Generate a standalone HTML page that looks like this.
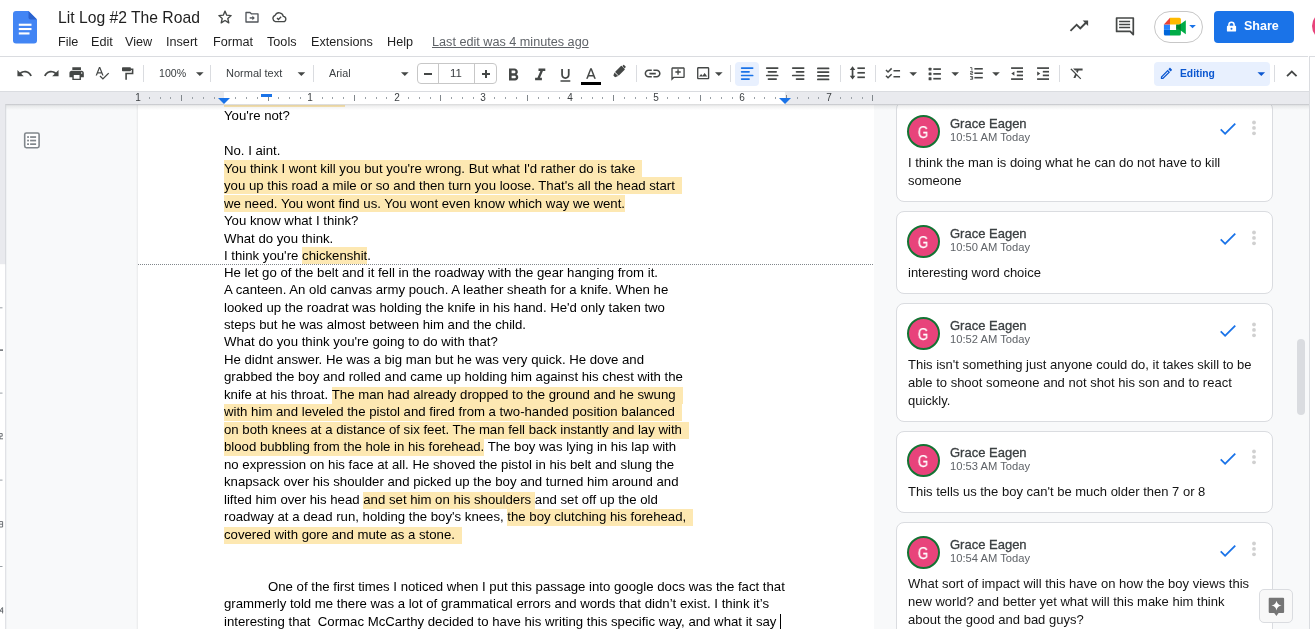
<!DOCTYPE html>
<html><head><meta charset="utf-8">
<style>
*{box-sizing:border-box}
html,body{margin:0;padding:0}
.ln,.menu,.tb,.nm,.tm,.ct,#title,.rl,.av,.txt{will-change:transform}
body{width:1315px;height:629px;overflow:hidden;position:relative;background:#fff;font-family:"Liberation Sans",sans-serif;color:#202124}
.a{position:absolute}
.ic{position:absolute;display:block}
/* header */
#title{left:58px;top:8.2px;font-size:15.7px;color:#1f1f1f;white-space:pre;line-height:20px}
.menu{position:absolute;top:33.7px;font-size:12.65px;color:#1f1f1f;white-space:pre;line-height:16px}
#hline{left:0;top:56px;width:1308px;height:1px;background:#dadce0}
#hline2{left:1310px;top:56px;width:5px;height:1px;background:#dadce0}
#vline{left:1309px;top:56px;width:1px;height:573px;background:#dadce0}
/* toolbar */
.tb{position:absolute;font-size:11px;color:#3c4043;white-space:pre;line-height:14px}
.sep{position:absolute;top:65px;width:1px;height:17px;background:#dadce0}
.arr{position:absolute;top:72.5px;width:0;height:0;border-left:3.5px solid transparent;border-right:3.5px solid transparent;border-top:3.5px solid #444746}
/* ruler */
#ruler{left:0;top:91px;width:1308px;height:13px;background:#e8eaed}
#rulerw{left:224px;top:91px;width:561px;height:13px;background:#fff}
#rshadow{left:0;top:104px;width:1308px;height:3px;background:linear-gradient(rgba(60,64,67,.18),rgba(60,64,67,0))}
.rl{position:absolute;top:92.5px;font-size:9.5px;color:#3c4043;line-height:11px}
/* panels */
#leftp{left:0;top:104px;width:138px;height:525px;background:#f8f9fa}
#vrul{left:0;top:104px;width:6px;height:525px;background:#e8eaed}
#page{left:138px;top:104px;width:736px;height:525px;background:#fff}
#rightp{left:874px;top:104px;width:435px;height:525px;background:#f8f9fa}
/* doc text */
.ln{position:absolute;left:224.2px;height:17.47px;line-height:15.5px;font-size:13.2px;color:#000;white-space:pre}
.h{background:#fde8b2;display:inline-block;height:17.46px;vertical-align:top}
#dots{left:138px;top:264px;width:736px;height:1px;background-image:linear-gradient(90deg,#80868b 50%,transparent 50%);background-size:2px 1px}
/* comments */
.card{position:absolute;left:896px;width:377px;background:#fff;border:1px solid #dadce0;border-radius:8px}
.av{position:absolute;left:10px;width:33px;height:33px;border-radius:50%;background:#e8437b;border:2px solid #137333;color:#fff;font-size:15.6px;text-align:center;line-height:32.2px;-webkit-text-stroke:.25px #fff}
.nm{position:absolute;left:53px;font-size:13px;-webkit-text-stroke:.3px #3c4043;color:#3c4043;white-space:pre;line-height:15px}
.tm{position:absolute;left:53px;font-size:11.2px;color:#5f6368;white-space:pre;line-height:13px}
.ct{position:absolute;left:11px;font-size:13px;color:#141414;white-space:pre;line-height:18px}
</style></head><body>

<!-- HEADER -->
<svg class="ic" style="left:13px;top:11px" width="24" height="33" viewBox="0 0 24 33">
 <path d="M3 0H15.5L24 8.5V29.5Q24 32.5 21 32.5H3Q0 32.5 0 29.5V3Q0 0 3 0Z" fill="#4285f4"/>
 <path d="M15.5 0L24 8.5H17.5Q15.5 8.5 15.5 6.5Z" fill="#2a62cf"/>
 <rect x="5.8" y="12.7" width="12.7" height="2.1" fill="#fff"/>
 <rect x="5.8" y="17.0" width="12.7" height="2.1" fill="#fff"/>
 <rect x="5.8" y="21.4" width="10.7" height="2.1" fill="#fff"/>
</svg>
<div id="title" class="a">Lit Log #2 The Road</div>
<!-- star -->
<svg class="ic" style="left:217px;top:9px" width="16" height="16" viewBox="0 0 24 24"><path d="M12 3.2l2.6 6.1 6.6.6-5 4.4 1.5 6.5L12 17.3l-5.7 3.5 1.5-6.5-5-4.4 6.6-.6z" fill="none" stroke="#444746" stroke-width="2" stroke-linejoin="round"/></svg>
<!-- folder -->
<svg class="ic" style="left:244px;top:9px" width="16" height="16" viewBox="0 0 24 24"><path d="M3 5.2h6l2 2h10v12.3H3z" fill="none" stroke="#50545a" stroke-width="2" stroke-linejoin="round"/><path d="M8.5 13.4h5.5" stroke="#50545a" stroke-width="2.2"/><path d="M12.6 10l3.6 3.4-3.6 3.4z" fill="#50545a"/></svg>
<!-- cloud -->
<svg class="ic" style="left:271px;top:9px" width="16" height="16" viewBox="0 0 24 24"><path d="M6.5 19h11.5a4 4 0 0 0 .5-8 6.5 6.5 0 0 0-12.3-1.5A5 5 0 0 0 6.5 19z" fill="none" stroke="#444746" stroke-width="2"/><path d="M9 13.5l2.2 2.2 4-4" fill="none" stroke="#444746" stroke-width="2"/></svg>

<div class="menu" style="left:57.6px">File</div>
<div class="menu" style="left:90.5px">Edit</div>
<div class="menu" style="left:125px">View</div>
<div class="menu" style="left:166px">Insert</div>
<div class="menu" style="left:212.5px">Format</div>
<div class="menu" style="left:266.7px">Tools</div>
<div class="menu" style="left:310.7px">Extensions</div>
<div class="menu" style="left:386.6px">Help</div>
<div class="menu" style="left:432px;color:#5f6368;text-decoration:underline">Last edit was 4 minutes ago</div>

<!-- right header -->
<svg class="ic" style="left:1068px;top:15.3px" width="21.96" height="21.96" viewBox="0 0 24 24"><path d="M16 6l2.29 2.29-4.88 4.88-4-4L2 16.59 3.41 18l6-6 4 4 6.3-6.29L22 12V6z" fill="#444746"/></svg>
<svg class="ic" style="left:1100px;top:10px" width="50" height="30" viewBox="1100 10 50 30"><path d="M1116.6 18H1133.3V34.6L1130.2 31.4H1116.6Z" fill="none" stroke="#444746" stroke-width="1.7" stroke-linejoin="round"/><path d="M1119.1 21.4H1130.1M1119.1 24.5H1130.1M1119.1 27.6H1130.1" stroke="#444746" stroke-width="1.5"/></svg>
<div class="a" style="left:1154px;top:11px;width:49px;height:31.5px;border:1px solid #c7c7c7;border-radius:16px"></div>
<svg class="ic" style="left:1160px;top:15px" width="40" height="24" viewBox="1160 15 40 24">
 <path d="M1170 17.8H1179.4Q1180.9 17.8 1180.9 19.3V24.5H1170Z" fill="#ffba00"/>
 <path d="M1163.9 24.5H1170V29.9H1163.9Z" fill="#2684fc"/>
 <path d="M1163.9 24.5L1170 17.8V24.5Z" fill="#ea4335"/>
 <path d="M1163.9 29.9H1170V35.4H1165.4Q1163.9 35.4 1163.9 33.9Z" fill="#0066da"/>
 <path d="M1170 29.9H1180.9V33.9Q1180.9 35.4 1179.4 35.4H1170Z" fill="#00ac47"/>
 <path d="M1176.1 24.5H1180.9V29.9H1176.1Z" fill="#00832d"/>
 <path d="M1176.1 27.2L1185.8 20.2V34.2Z" fill="#00ac47"/>
 <path d="M1176.1 27.2L1180.9 23.7V30.7Z" fill="#00832d"/>
 <path d="M1189.2 25.1H1195.9L1192.55 28.2Z" fill="#1a73e8"/>
</svg>
<div class="a" style="left:1214px;top:11px;width:80px;height:32px;background:#1a73e8;border-radius:4px"></div>
<svg class="ic" style="left:1226px;top:21px" width="11" height="11" viewBox="0 0 11 11"><path d="M2.9 4.9V3.8a2.6 2.6 0 0 1 5.2 0V4.9" fill="none" stroke="#fff" stroke-width="1.5"/><rect x=".9" y="4.8" width="9.2" height="5.8" rx=".9" fill="#fff"/><circle cx="5.5" cy="7.7" r="1" fill="#1a73e8"/></svg>
<div class="a txt" style="left:1243.5px;top:19px;font-size:12.5px;font-weight:bold;color:#fff;line-height:14px">Share</div>
<div class="a" style="left:1311.8px;top:11.9px;width:28.6px;height:28.6px;border-radius:50%;background:#e8437b"></div>

<div id="hline" class="a"></div>
<div id="hline2" class="a"></div>




<!-- PANELS -->
<div id="leftp" class="a"></div>

<div id="page" class="a"></div>
<div id="rightp" class="a"></div>
<div class="a" style="left:136px;top:104px;width:2px;height:525px;background:linear-gradient(90deg,rgba(0,0,0,0),rgba(0,0,0,.06))"></div>

<!-- DOC -->
<!--DOC-->
<div class="ln" style="top:90.00px;line-height:17.46px"><span class="h" style="width:121px"></span></div>
<div class="ln" style="top:107.46px;line-height:17.46px">You're not?</div>
<div class="ln" style="top:142.38px;line-height:17.46px">No. I aint.</div>
<div class="ln" style="top:159.84px;line-height:17.46px"><span class="h" style="padding-right:3.4px">You think I wont kill you but you're wrong. But what I'd rather do is take </span></div>
<div class="ln" style="top:177.30px;line-height:17.46px"><span class="h" style="padding-right:3.4px">you up this road a mile or so and then turn you loose. That's all the head start </span></div>
<div class="ln" style="top:194.76px;line-height:17.46px"><span class="h">we need. You wont find us. You wont even know which way we went.</span></div>
<div class="ln" style="top:212.22px;line-height:17.46px">You know what I think?</div>
<div class="ln" style="top:229.68px;line-height:17.46px">What do you think.</div>
<div class="ln" style="top:247.14px;line-height:17.46px">I think you're <span class="h">chickenshit</span>.</div>
<div class="ln" style="top:264.60px">He let go of the belt and it fell in the roadway with the gear hanging from it.</div>
<div class="ln" style="top:282.06px">A canteen. An old canvas army pouch. A leather sheath for a knife. When he</div>
<div class="ln" style="top:299.52px">looked up the roadrat was holding the knife in his hand. He'd only taken two</div>
<div class="ln" style="top:316.98px">steps but he was almost between him and the child.</div>
<div class="ln" style="top:334.44px">What do you think you're going to do with that?</div>
<div class="ln" style="top:351.90px">He didnt answer. He was a big man but he was very quick. He dove and</div>
<div class="ln" style="top:369.36px">grabbed the boy and rolled and came up holding him against his chest with the</div>
<div class="ln" style="top:386.82px">knife at his throat. <span class="h" style="padding-right:3.4px">The man had already dropped to the ground and he swung </span></div>
<div class="ln" style="top:404.28px"><span class="h" style="padding-right:3.4px">with him and leveled the pistol and fired from a two-handed position balanced </span></div>
<div class="ln" style="top:421.74px"><span class="h" style="padding-right:3.4px">on both knees at a distance of six feet. The man fell back instantly and lay with </span></div>
<div class="ln" style="top:439.20px"><span class="h">blood bubbling from the hole in his forehead.</span> The boy was lying in his lap with</div>
<div class="ln" style="top:456.66px">no expression on his face at all. He shoved the pistol in his belt and slung the</div>
<div class="ln" style="top:474.12px">knapsack over his shoulder and picked up the boy and turned him around and</div>
<div class="ln" style="top:491.58px">lifted him over his head <span class="h">and set him on his shoulders </span>and set off up the old</div>
<div class="ln" style="top:509.04px">roadway at a dead run, holding the boy's knees, <span class="h" style="padding-right:3.4px">the boy clutching his forehead, </span></div>
<div class="ln" style="top:526.50px"><span class="h" style="padding-right:3.4px">covered with gore and mute as a stone. </span></div>
<div class="ln" style="top:578.88px;left:267.6px">One of the first times I noticed when I put this passage into google docs was the fact that</div>
<div class="ln" style="top:596.34px">grammerly told me there was a lot of grammatical errors and words that didn’t exist. I think it’s</div>
<div class="ln" style="top:613.80px">interesting that  Cormac McCarthy decided to have his writing this specific way, and what it say </div>
<div id="dots" class="a"></div>
<div class="a" style="left:779.5px;top:614.10px;width:1px;height:16px;background:#000"></div>
<!--/DOC-->

<!-- TOOLBAR -->
<div class="a" style="left:0;top:57px;width:1309px;height:34px;background:#fff"></div>
<div class="a" style="left:735px;top:62px;width:24px;height:24px;border-radius:4px;background:#e8f0fe"></div>
<div class="a" style="left:1154px;top:62px;width:116px;height:24px;border-radius:4px;background:#e8f0fe"></div>
<svg class="ic" style="left:16.49px;top:65.27px" width="16.97" height="16.97" viewBox="0 0 24 24"><path d="M12.5 8c-2.65 0-5.05.99-6.9 2.6L2 7v9h9l-3.62-3.62c1.39-1.16 3.16-1.88 5.12-1.88 3.54 0 6.55 2.31 7.6 5.5l2.37-.78C21.08 11.03 17.15 8 12.5 8z" fill="#444746"/></svg>
<svg class="ic" style="left:42.98px;top:65.27px" width="16.97" height="16.97" viewBox="0 0 24 24"><path d="M18.4 10.6C16.55 8.99 14.15 8 11.5 8c-4.65 0-8.58 3.03-9.96 7.22L3.9 16c1.05-3.19 4.05-5.5 7.6-5.5 1.95 0 3.730.72 5.12 1.88L13 16h9V7l-3.6 3.6z" fill="#444746"/></svg>
<svg class="ic" style="left:67.66px;top:64.76px" width="17.28" height="17.28" viewBox="0 0 24 24"><path d="M19 8H5c-1.66 0-3 1.34-3 3v6h4v4h12v-4h4v-6c0-1.66-1.34-3-3-3zm-3 11H8v-5h8v5zm3-7c-.55 0-1-.45-1-1s.45-1 1-1 1 .45 1 1-.45 1-1 1zm-1-9H6v4h12V3z" fill="#444746"/></svg>
<svg class="ic" style="left:94.02px;top:65.18px" width="15.84" height="15.84" viewBox="0 0 24 24"><path d="M12.45 16h2.09L9.43 3H7.57L2.46 16h2.09l1.12-3h5.64l1.14 3zm-6.02-5L8.5 5.48 10.57 11H6.43zm15.16.59l-8.09 8.09L9.83 16l-1.41 1.41 5.09 5.09L23 13l-1.41-1.41z" fill="#444746"/></svg>
<svg class="ic" style="left:503.14px;top:64.74px" width="20.64" height="20.64" viewBox="0 0 24 24"><path d="M15.6 10.79c.97-.67 1.65-1.77 1.65-2.79 0-2.26-1.75-4-4-4H7v14h7.04c2.09 0 3.71-1.7 3.710-3.79 0-1.52-.86-2.82-2.15-3.42zM10 6.5h3c.83 0 1.5.67 1.5 1.5s-.67 1.5-1.5 1.5h-3v-3zm3.5 9H10v-3h3.5c.83 0 1.5.67 1.5 1.5s-.67 1.5-1.5 1.5z" fill="#444746"/></svg>
<svg class="ic" style="left:530.00px;top:64.65px" width="20.40" height="20.40" viewBox="0 0 24 24"><path d="M10 4v3h2.21l-3.42 8H6v3h8v-3h-2.21l3.42-8H18V4z" fill="#444746"/></svg>
<svg class="ic" style="left:556.70px;top:66.50px" width="16.80" height="16.80" viewBox="0 0 24 24"><path d="M12 17c3.31 0 6-2.690 6-6V3h-2.5v8c0 1.93-1.57 3.5-3.5 3.5S8.5 12.93 8.5 11V3H6v8c0 3.31 2.69 6 6 6zm-7 2v2h14v-2H5z" fill="#444746"/></svg>
<svg class="ic" style="left:581.80px;top:65.50px" width="18.00" height="18.00" viewBox="0 0 24 24"><path d="M11 3L5.5 17h2.25l1.12-3h6.25l1.12 3h2.25L13 3h-2zm-1.38 9L12 5.67 14.38 12H9.62z" fill="#444746"/></svg>
<svg class="ic" style="left:643.40px;top:64.30px" width="19.20" height="19.20" viewBox="0 0 24 24"><path d="M3.9 12c0-1.71 1.39-3.1 3.1-3.1h4V7H7c-2.76 0-5 2.24-5 5s2.24 5 5 5h4v-1.9H7c-1.71 0-3.1-1.39-3.1-3.1zM8 13h8v-2H8v2zm9-6h-4v1.9h4c1.71 0 3.1 1.39 3.1 3.1s-1.39 3.1-3.1 3.1h-4V17h4c2.76 0 5-2.24 5-5s-2.24-5-5-5z" fill="#444746"/></svg>
<svg class="ic" style="left:670.16px;top:65.66px" width="16.08" height="16.08" viewBox="0 0 24 24"><path d="M20 2H4c-1.1 0-2 .9-2 2v18l4-4h14c1.1 0 2-.9 2-2V4c0-1.1-.9-2-2-2zm0 14H5.17L4 17.17V4h16v12zM11 5h2v3h3v2h-3v3h-2v-3H8V8h3z" fill="#444746"/></svg>
<svg class="ic" style="left:694.74px;top:65.24px" width="16.32" height="16.32" viewBox="0 0 24 24"><path d="M19 5v14H5V5h14m0-2H5c-1.1 0-2 .9-2 2v14c0 1.1.9 2 2 2h14c1.1 0 2-.9 2-2V5c0-1.1-.9-2-2-2zm-4.86 8.86l-3 3.87L9 13.14 6 17h12l-3.86-5.14z" fill="#444746"/></svg>
<svg class="ic" style="left:884.14px;top:65.11px" width="17.52" height="17.52" viewBox="0 0 24 24"><path d="M22 7h-9v2h9V7zm0 8h-9v2h9v-2zM5.54 11L2 7.46l1.41-1.410 2.12 2.12 4.24-4.24 1.41 1.41L5.54 11zm0 8L2 15.46l1.41-1.41 2.12 2.12 4.24-4.24 1.41 1.41L5.54 19z" fill="#444746"/></svg>
<svg class="ic" style="left:1069.12px;top:65.46px" width="16.32" height="16.32" viewBox="0 0 24 24"><path d="M3.27 5L2 6.27l6.97 6.97L6.5 19h3l1.57-3.66L16.73 21 18 19.73 3.55 5.27 3.27 5zM6 5v.18L8.82 8h2.4l-.72 1.68 2.1 2.1L14.21 8H20V5H6z" fill="#444746"/></svg>
<svg class="ic" style="left:1280.90px;top:62.87px" width="21.60" height="21.60" viewBox="0 0 24 24"><path d="M12 8l-6 6 1.41 1.41L12 10.83l4.59 4.58L18 14z" fill="#444746"/></svg>
<svg class="ic" style="left:0;top:0" width="1315" height="100" viewBox="0 0 1315 100"><line x1="741.65" y1="68.10" x2="752.65" y2="68.10" stroke="#1a73e8" stroke-width="1.70" stroke-linecap="round"/><line x1="766.75" y1="68.10" x2="777.65" y2="68.10" stroke="#444746" stroke-width="1.70" stroke-linecap="round"/><line x1="792.75" y1="68.10" x2="803.65" y2="68.10" stroke="#444746" stroke-width="1.70" stroke-linecap="round"/><line x1="817.85" y1="68.40" x2="828.55" y2="68.40" stroke="#444746" stroke-width="1.70" stroke-linecap="round"/><line x1="741.65" y1="71.80" x2="749.05" y2="71.80" stroke="#1a73e8" stroke-width="1.70" stroke-linecap="round"/><line x1="768.45" y1="71.80" x2="776.15" y2="71.80" stroke="#444746" stroke-width="1.70" stroke-linecap="round"/><line x1="796.55" y1="71.80" x2="803.65" y2="71.80" stroke="#444746" stroke-width="1.70" stroke-linecap="round"/><line x1="817.85" y1="72.10" x2="828.55" y2="72.10" stroke="#444746" stroke-width="1.70" stroke-linecap="round"/><line x1="741.65" y1="75.50" x2="752.65" y2="75.50" stroke="#1a73e8" stroke-width="1.70" stroke-linecap="round"/><line x1="766.75" y1="75.50" x2="777.65" y2="75.50" stroke="#444746" stroke-width="1.70" stroke-linecap="round"/><line x1="792.75" y1="75.50" x2="803.65" y2="75.50" stroke="#444746" stroke-width="1.70" stroke-linecap="round"/><line x1="817.85" y1="75.80" x2="828.55" y2="75.80" stroke="#444746" stroke-width="1.70" stroke-linecap="round"/><line x1="741.65" y1="79.10" x2="749.05" y2="79.10" stroke="#1a73e8" stroke-width="1.70" stroke-linecap="round"/><line x1="768.45" y1="79.10" x2="776.15" y2="79.10" stroke="#444746" stroke-width="1.70" stroke-linecap="round"/><line x1="796.55" y1="79.10" x2="803.65" y2="79.10" stroke="#444746" stroke-width="1.70" stroke-linecap="round"/><line x1="817.85" y1="79.40" x2="828.55" y2="79.40" stroke="#444746" stroke-width="1.70" stroke-linecap="round"/><line x1="857.40" y1="68.20" x2="864.90" y2="68.20" stroke="#444746" stroke-width="1.70" stroke-linecap="butt"/><line x1="857.40" y1="72.80" x2="864.90" y2="72.80" stroke="#444746" stroke-width="1.70" stroke-linecap="butt"/><line x1="857.40" y1="77.30" x2="864.90" y2="77.30" stroke="#444746" stroke-width="1.70" stroke-linecap="butt"/><path d="M852.55 68.5V77.3" stroke="#444746" stroke-width="1.7"/><path d="M849.8 70.1L852.55 66.3L855.3 70.1zM849.8 75.7L852.55 79.6L855.3 75.7z" fill="#444746"/><rect x="928.6" y="67.65" width="2.9" height="2.9" rx=".5" fill="#444746"/><line x1="933.30" y1="69.10" x2="940.90" y2="69.10" stroke="#444746" stroke-width="1.70" stroke-linecap="butt"/><rect x="928.6" y="72.45" width="2.9" height="2.9" rx=".5" fill="#444746"/><line x1="933.30" y1="73.90" x2="940.90" y2="73.90" stroke="#444746" stroke-width="1.70" stroke-linecap="butt"/><rect x="928.6" y="77.25" width="2.9" height="2.9" rx=".5" fill="#444746"/><line x1="933.30" y1="78.70" x2="940.90" y2="78.70" stroke="#444746" stroke-width="1.70" stroke-linecap="butt"/><line x1="974.40" y1="68.80" x2="982.80" y2="68.80" stroke="#444746" stroke-width="1.60" stroke-linecap="butt"/><line x1="974.40" y1="73.20" x2="982.80" y2="73.20" stroke="#444746" stroke-width="1.60" stroke-linecap="butt"/><line x1="974.40" y1="77.70" x2="982.80" y2="77.70" stroke="#444746" stroke-width="1.60" stroke-linecap="butt"/><path d="M970.1 67.6H971.9V70.5M970.1 71.6H972.6V73H970.6V74.4H972.9M970.1 76.5H972.6V79.3H970.1M970.9 77.9H972.6" fill="none" stroke="#444746" stroke-width="0.85"/><line x1="1011.10" y1="68.10" x2="1023.00" y2="68.10" stroke="#444746" stroke-width="1.70" stroke-linecap="butt"/><line x1="1011.10" y1="79.10" x2="1023.00" y2="79.10" stroke="#444746" stroke-width="1.70" stroke-linecap="butt"/><line x1="1016.80" y1="71.70" x2="1023.00" y2="71.70" stroke="#444746" stroke-width="1.70" stroke-linecap="butt"/><line x1="1016.80" y1="75.40" x2="1023.00" y2="75.40" stroke="#444746" stroke-width="1.70" stroke-linecap="butt"/><path d="M1014.4 71.4V75.8L1011.3 73.6z" fill="#444746"/><line x1="1037.10" y1="68.10" x2="1049.00" y2="68.10" stroke="#444746" stroke-width="1.70" stroke-linecap="butt"/><line x1="1037.10" y1="79.10" x2="1049.00" y2="79.10" stroke="#444746" stroke-width="1.70" stroke-linecap="butt"/><line x1="1042.80" y1="71.70" x2="1049.00" y2="71.70" stroke="#444746" stroke-width="1.70" stroke-linecap="butt"/><line x1="1042.80" y1="75.40" x2="1049.00" y2="75.40" stroke="#444746" stroke-width="1.70" stroke-linecap="butt"/><path d="M1037.2 71.4V75.8L1040.3 73.6z" fill="#444746"/><rect x="122" y="67.3" width="8.9" height="4" rx=".8" fill="#444746"/><path d="M130.5 69.2H132.6V73.5H126.1V79.8" fill="none" stroke="#444746" stroke-width="1.6"/><g transform="translate(618.6 72) rotate(45)"><rect x="-2.6" y="-6.5" width="5.2" height="9" rx=".6" fill="#444746"/><path d="M-2.6 3.2H2.6L1.2 6.2H-1.2z" fill="#444746"/><rect x="-1.6" y="-8.8" width="3.2" height="1.9" rx=".5" fill="#444746"/></g></svg>
<svg class="ic" style="left:1159.06px;top:66.16px" width="14.88" height="14.88" viewBox="0 0 24 24"><path d="M3 17.25V21h3.75L17.81 9.94l-3.75-3.75L3 17.25zM5.92 19H5v-.92l9.06-9.06.92.92L5.92 19zM20.71 5.63l-2.34-2.34c-.2-.2-.45-.29-.71-.29s-.51.1-.7.29l-1.83 1.83 3.75 3.75 1.83-1.83c.39-.39.39-1.02 0-1.41z" fill="#0b57d0"/></svg>
<div class="tb" style="left:1180px;top:66.6px;font-size:10.3px;font-weight:bold;color:#0b57d0">Editing</div>
<div class="a" style="left:581px;top:82px;width:20px;height:3px;background:#000"></div>
<div class="sep" style="left:142.9px"></div>
<div class="sep" style="left:210.0px"></div>
<div class="sep" style="left:313.4px"></div>
<div class="sep" style="left:636.0px"></div>
<div class="sep" style="left:729.5px"></div>
<div class="sep" style="left:839.8px"></div>
<div class="sep" style="left:875.1px"></div>
<div class="sep" style="left:1059.1px"></div>
<div class="sep" style="left:1274.0px"></div>
<svg class="ic" style="left:0;top:0" width="1315" height="100" viewBox="0 0 1315 100"><path d="M196.00 72.2h7.6l-3.8 3.8z" fill="#444746"/><path d="M297.60 72.2h7.6l-3.8 3.8z" fill="#444746"/><path d="M401.00 72.2h7.6l-3.8 3.8z" fill="#444746"/><path d="M715.00 72.2h7.6l-3.8 3.8z" fill="#444746"/><path d="M909.40 72.2h7.6l-3.8 3.8z" fill="#444746"/><path d="M951.40 72.2h7.6l-3.8 3.8z" fill="#444746"/><path d="M992.20 72.2h7.6l-3.8 3.8z" fill="#444746"/><path d="M1257.5 72.2h7.6l-3.8 3.8z" fill="#0b57d0"/></svg>
<div class="tb" style="left:158.6px;top:65.6px;font-size:10.6px">100%</div>
<div class="tb" style="left:225.8px;top:65.6px;font-size:11px">Normal text</div>
<div class="tb" style="left:328.8px;top:65.6px;font-size:10.8px">Arial</div>
<div class="a" style="left:417px;top:63px;width:79.5px;height:21px;border:1px solid #c7c7c7;border-radius:4px"></div>
<div class="a" style="left:438px;top:63px;width:1px;height:21px;background:#c7c7c7"></div>
<div class="a" style="left:474px;top:63px;width:1px;height:21px;background:#c7c7c7"></div>
<div class="a" style="left:424px;top:73px;width:8px;height:1.6px;background:#444746"></div>
<div class="a" style="left:481.8px;top:73px;width:8px;height:1.6px;background:#444746"></div>
<div class="a" style="left:485.1px;top:69.8px;width:1.6px;height:8px;background:#444746"></div>
<div class="tb" style="left:449.5px;top:65.6px;font-size:11.4px">11</div>
<!-- /TOOLBAR -->

<!-- COMMENTS -->
<div class="a" style="left:874px;top:104px;width:435px;height:525px;overflow:hidden">
<div class="card" style="left:22.4px;top:-2.80px;height:100.50px;width:376.5px"></div>
<div class="av" style="left:33.0px;top:10.50px">&#8203;<span style="display:inline-block;transform:scaleX(.86)">G</span></div>
<div class="nm" style="left:75.6px;top:11.80px">Grace Eagen</div>
<div class="tm" style="left:75.6px;top:26.55px">10:51 AM Today</div>
<div class="ct" style="left:33.6px;top:49.80px">I think the man is doing what he can do not have to kill</div>
<div class="ct" style="left:33.6px;top:67.65px">someone</div>
<svg class="ic" style="left:343.02px;top:14.33px" width="21.60" height="21.60" viewBox="0 0 24 24"><path d="M9 16.17L4.83 12l-1.42 1.41L9 19 21 7l-1.41-1.41z" fill="#1a73e8"/></svg>
<svg class="ic" style="left:377.20px;top:16.10px" width="6" height="16" viewBox="0 0 6 16"><circle cx="3" cy="2.5" r="1.9" fill="#d0d0d0"/><circle cx="3" cy="7.9" r="1.9" fill="#d0d0d0"/><circle cx="3" cy="13.3" r="1.9" fill="#d0d0d0"/></svg>
<div class="card" style="left:22.4px;top:107.20px;height:82.65px;width:376.5px"></div>
<div class="av" style="left:33.0px;top:120.50px">&#8203;<span style="display:inline-block;transform:scaleX(.86)">G</span></div>
<div class="nm" style="left:75.6px;top:121.80px">Grace Eagen</div>
<div class="tm" style="left:75.6px;top:136.55px">10:50 AM Today</div>
<div class="ct" style="left:33.6px;top:159.80px">interesting word choice</div>
<svg class="ic" style="left:343.02px;top:124.33px" width="21.60" height="21.60" viewBox="0 0 24 24"><path d="M9 16.17L4.83 12l-1.42 1.41L9 19 21 7l-1.41-1.41z" fill="#1a73e8"/></svg>
<svg class="ic" style="left:377.20px;top:126.10px" width="6" height="16" viewBox="0 0 6 16"><circle cx="3" cy="2.5" r="1.9" fill="#d0d0d0"/><circle cx="3" cy="7.9" r="1.9" fill="#d0d0d0"/><circle cx="3" cy="13.3" r="1.9" fill="#d0d0d0"/></svg>
<div class="card" style="left:22.4px;top:199.30px;height:118.35px;width:376.5px"></div>
<div class="av" style="left:33.0px;top:212.60px">&#8203;<span style="display:inline-block;transform:scaleX(.86)">G</span></div>
<div class="nm" style="left:75.6px;top:213.90px">Grace Eagen</div>
<div class="tm" style="left:75.6px;top:228.65px">10:52 AM Today</div>
<div class="ct" style="left:33.6px;top:251.90px">This isn't something just anyone could do, it takes skill to be</div>
<div class="ct" style="left:33.6px;top:269.75px">able to shoot someone and not shot his son and to react</div>
<div class="ct" style="left:33.6px;top:287.60px">quickly.</div>
<svg class="ic" style="left:343.02px;top:216.43px" width="21.60" height="21.60" viewBox="0 0 24 24"><path d="M9 16.17L4.83 12l-1.42 1.41L9 19 21 7l-1.41-1.41z" fill="#1a73e8"/></svg>
<svg class="ic" style="left:377.20px;top:218.20px" width="6" height="16" viewBox="0 0 6 16"><circle cx="3" cy="2.5" r="1.9" fill="#d0d0d0"/><circle cx="3" cy="7.9" r="1.9" fill="#d0d0d0"/><circle cx="3" cy="13.3" r="1.9" fill="#d0d0d0"/></svg>
<div class="card" style="left:22.4px;top:326.50px;height:82.65px;width:376.5px"></div>
<div class="av" style="left:33.0px;top:339.80px">&#8203;<span style="display:inline-block;transform:scaleX(.86)">G</span></div>
<div class="nm" style="left:75.6px;top:341.10px">Grace Eagen</div>
<div class="tm" style="left:75.6px;top:355.85px">10:53 AM Today</div>
<div class="ct" style="left:33.6px;top:379.10px">This tells us the boy can't be much older then 7 or 8</div>
<svg class="ic" style="left:343.02px;top:343.63px" width="21.60" height="21.60" viewBox="0 0 24 24"><path d="M9 16.17L4.83 12l-1.42 1.41L9 19 21 7l-1.41-1.41z" fill="#1a73e8"/></svg>
<svg class="ic" style="left:377.20px;top:345.40px" width="6" height="16" viewBox="0 0 6 16"><circle cx="3" cy="2.5" r="1.9" fill="#d0d0d0"/><circle cx="3" cy="7.9" r="1.9" fill="#d0d0d0"/><circle cx="3" cy="13.3" r="1.9" fill="#d0d0d0"/></svg>
<div class="card" style="left:22.4px;top:418.40px;height:118.35px;width:376.5px"></div>
<div class="av" style="left:33.0px;top:431.70px">&#8203;<span style="display:inline-block;transform:scaleX(.86)">G</span></div>
<div class="nm" style="left:75.6px;top:433.00px">Grace Eagen</div>
<div class="tm" style="left:75.6px;top:447.75px">10:54 AM Today</div>
<div class="ct" style="left:33.6px;top:471.00px">What sort of impact will this have on how the boy views this</div>
<div class="ct" style="left:33.6px;top:488.85px">new world? and better yet what will this make him think</div>
<div class="ct" style="left:33.6px;top:506.70px">about the good and bad guys?</div>
<svg class="ic" style="left:343.02px;top:435.53px" width="21.60" height="21.60" viewBox="0 0 24 24"><path d="M9 16.17L4.83 12l-1.42 1.41L9 19 21 7l-1.41-1.41z" fill="#1a73e8"/></svg>
<svg class="ic" style="left:377.20px;top:437.30px" width="6" height="16" viewBox="0 0 6 16"><circle cx="3" cy="2.5" r="1.9" fill="#d0d0d0"/><circle cx="3" cy="7.9" r="1.9" fill="#d0d0d0"/><circle cx="3" cy="13.3" r="1.9" fill="#d0d0d0"/></svg>
</div>
<!-- /COMMENTS -->

<!-- RULER -->
<div class="a" style="left:0;top:91px;width:1309px;height:13.5px;background:#e9eaee"></div>
<div class="a" style="left:224px;top:91px;width:561px;height:13.5px;background:#fff"></div>
<div class="a" style="left:0;top:91px;width:1309px;height:1px;background:#dadce0"></div>
<div class="a" style="left:0;top:104.4px;width:1309px;height:6px;background:linear-gradient(rgba(60,64,67,.2),rgba(60,64,67,.07) 40%,rgba(60,64,67,0))"></div>
<div class="a rl" style="left:137.60px;top:92.2px;width:10px;margin-left:-5px;text-align:center;font-size:10px;line-height:11px;color:#3c4043">1</div>
<div class="a" style="left:148.80px;top:97px;width:1px;height:2px;background:#9aa0a6"></div>
<div class="a" style="left:159.60px;top:97px;width:1px;height:2px;background:#9aa0a6"></div>
<div class="a" style="left:170.40px;top:97px;width:1px;height:2px;background:#9aa0a6"></div>
<div class="a" style="left:181.20px;top:95.3px;width:1px;height:5.5px;background:#80868b"></div>
<div class="a" style="left:192.00px;top:97px;width:1px;height:2px;background:#9aa0a6"></div>
<div class="a" style="left:202.80px;top:97px;width:1px;height:2px;background:#9aa0a6"></div>
<div class="a" style="left:213.60px;top:97px;width:1px;height:2px;background:#9aa0a6"></div>
<div class="a" style="left:235.20px;top:97px;width:1px;height:2px;background:#9aa0a6"></div>
<div class="a" style="left:246.00px;top:97px;width:1px;height:2px;background:#9aa0a6"></div>
<div class="a" style="left:256.80px;top:97px;width:1px;height:2px;background:#9aa0a6"></div>
<div class="a" style="left:267.60px;top:95.3px;width:1px;height:5.5px;background:#80868b"></div>
<div class="a" style="left:278.40px;top:97px;width:1px;height:2px;background:#9aa0a6"></div>
<div class="a" style="left:289.20px;top:97px;width:1px;height:2px;background:#9aa0a6"></div>
<div class="a" style="left:300.00px;top:97px;width:1px;height:2px;background:#9aa0a6"></div>
<div class="a rl" style="left:310.40px;top:92.2px;width:10px;margin-left:-5px;text-align:center;font-size:10px;line-height:11px;color:#3c4043">1</div>
<div class="a" style="left:321.60px;top:97px;width:1px;height:2px;background:#9aa0a6"></div>
<div class="a" style="left:332.40px;top:97px;width:1px;height:2px;background:#9aa0a6"></div>
<div class="a" style="left:343.20px;top:97px;width:1px;height:2px;background:#9aa0a6"></div>
<div class="a" style="left:354.00px;top:95.3px;width:1px;height:5.5px;background:#80868b"></div>
<div class="a" style="left:364.80px;top:97px;width:1px;height:2px;background:#9aa0a6"></div>
<div class="a" style="left:375.60px;top:97px;width:1px;height:2px;background:#9aa0a6"></div>
<div class="a" style="left:386.40px;top:97px;width:1px;height:2px;background:#9aa0a6"></div>
<div class="a rl" style="left:396.80px;top:92.2px;width:10px;margin-left:-5px;text-align:center;font-size:10px;line-height:11px;color:#3c4043">2</div>
<div class="a" style="left:408.00px;top:97px;width:1px;height:2px;background:#9aa0a6"></div>
<div class="a" style="left:418.80px;top:97px;width:1px;height:2px;background:#9aa0a6"></div>
<div class="a" style="left:429.60px;top:97px;width:1px;height:2px;background:#9aa0a6"></div>
<div class="a" style="left:440.40px;top:95.3px;width:1px;height:5.5px;background:#80868b"></div>
<div class="a" style="left:451.20px;top:97px;width:1px;height:2px;background:#9aa0a6"></div>
<div class="a" style="left:462.00px;top:97px;width:1px;height:2px;background:#9aa0a6"></div>
<div class="a" style="left:472.80px;top:97px;width:1px;height:2px;background:#9aa0a6"></div>
<div class="a rl" style="left:483.20px;top:92.2px;width:10px;margin-left:-5px;text-align:center;font-size:10px;line-height:11px;color:#3c4043">3</div>
<div class="a" style="left:494.40px;top:97px;width:1px;height:2px;background:#9aa0a6"></div>
<div class="a" style="left:505.20px;top:97px;width:1px;height:2px;background:#9aa0a6"></div>
<div class="a" style="left:516.00px;top:97px;width:1px;height:2px;background:#9aa0a6"></div>
<div class="a" style="left:526.80px;top:95.3px;width:1px;height:5.5px;background:#80868b"></div>
<div class="a" style="left:537.60px;top:97px;width:1px;height:2px;background:#9aa0a6"></div>
<div class="a" style="left:548.40px;top:97px;width:1px;height:2px;background:#9aa0a6"></div>
<div class="a" style="left:559.20px;top:97px;width:1px;height:2px;background:#9aa0a6"></div>
<div class="a rl" style="left:569.60px;top:92.2px;width:10px;margin-left:-5px;text-align:center;font-size:10px;line-height:11px;color:#3c4043">4</div>
<div class="a" style="left:580.80px;top:97px;width:1px;height:2px;background:#9aa0a6"></div>
<div class="a" style="left:591.60px;top:97px;width:1px;height:2px;background:#9aa0a6"></div>
<div class="a" style="left:602.40px;top:97px;width:1px;height:2px;background:#9aa0a6"></div>
<div class="a" style="left:613.20px;top:95.3px;width:1px;height:5.5px;background:#80868b"></div>
<div class="a" style="left:624.00px;top:97px;width:1px;height:2px;background:#9aa0a6"></div>
<div class="a" style="left:634.80px;top:97px;width:1px;height:2px;background:#9aa0a6"></div>
<div class="a" style="left:645.60px;top:97px;width:1px;height:2px;background:#9aa0a6"></div>
<div class="a rl" style="left:656.00px;top:92.2px;width:10px;margin-left:-5px;text-align:center;font-size:10px;line-height:11px;color:#3c4043">5</div>
<div class="a" style="left:667.20px;top:97px;width:1px;height:2px;background:#9aa0a6"></div>
<div class="a" style="left:678.00px;top:97px;width:1px;height:2px;background:#9aa0a6"></div>
<div class="a" style="left:688.80px;top:97px;width:1px;height:2px;background:#9aa0a6"></div>
<div class="a" style="left:699.60px;top:95.3px;width:1px;height:5.5px;background:#80868b"></div>
<div class="a" style="left:710.40px;top:97px;width:1px;height:2px;background:#9aa0a6"></div>
<div class="a" style="left:721.20px;top:97px;width:1px;height:2px;background:#9aa0a6"></div>
<div class="a" style="left:732.00px;top:97px;width:1px;height:2px;background:#9aa0a6"></div>
<div class="a rl" style="left:742.40px;top:92.2px;width:10px;margin-left:-5px;text-align:center;font-size:10px;line-height:11px;color:#3c4043">6</div>
<div class="a" style="left:753.60px;top:97px;width:1px;height:2px;background:#9aa0a6"></div>
<div class="a" style="left:764.40px;top:97px;width:1px;height:2px;background:#9aa0a6"></div>
<div class="a" style="left:775.20px;top:97px;width:1px;height:2px;background:#9aa0a6"></div>
<div class="a" style="left:786.00px;top:95.3px;width:1px;height:5.5px;background:#80868b"></div>
<div class="a" style="left:796.80px;top:97px;width:1px;height:2px;background:#9aa0a6"></div>
<div class="a" style="left:807.60px;top:97px;width:1px;height:2px;background:#9aa0a6"></div>
<div class="a" style="left:818.40px;top:97px;width:1px;height:2px;background:#9aa0a6"></div>
<div class="a rl" style="left:828.80px;top:92.2px;width:10px;margin-left:-5px;text-align:center;font-size:10px;line-height:11px;color:#3c4043">7</div>
<div class="a" style="left:840.00px;top:97px;width:1px;height:2px;background:#9aa0a6"></div>
<div class="a" style="left:850.80px;top:97px;width:1px;height:2px;background:#9aa0a6"></div>
<div class="a" style="left:861.60px;top:97px;width:1px;height:2px;background:#9aa0a6"></div>
<div class="a" style="left:872.40px;top:95.3px;width:1px;height:5.5px;background:#80868b"></div>
<svg class="ic" style="left:218px;top:98px" width="12" height="6" viewBox="0 0 12 6"><path d="M0 0H12L6 6z" fill="#1a73e8"/></svg>
<svg class="ic" style="left:779px;top:98px" width="12" height="6" viewBox="0 0 12 6"><path d="M0 0H12L6 6z" fill="#1a73e8"/></svg>
<div class="a" style="left:261px;top:94px;width:11px;height:3px;background:#1a73e8"></div>
<!-- /RULER -->

<!-- EXTRAS -->
<svg class="ic" style="left:0;top:104px" width="40" height="525" viewBox="0 104 40 525">
 <rect x="0" y="104" width="5.2" height="160.4" fill="#e9eaee"/>
 <rect x="5.2" y="104" width="1" height="525" fill="#d3d5d9"/>
 <rect x="0" y="264.4" width="5.2" height="364.6" fill="#fff"/>
 <rect x="0" y="307.3" width="2.5" height="1" fill="#9aa0a6"/>
 <rect x="0" y="349.4" width="3" height="1.4" fill="#5f6368"/>
 <rect x="0" y="392.6" width="2.5" height="1" fill="#9aa0a6"/>
 <path d="M0 433.6h2.2v2.6H0v2.6h3" fill="none" stroke="#5f6368" stroke-width=".9"/>
 <rect x="0" y="479.6" width="2.5" height="1" fill="#9aa0a6"/>
 <path d="M0 521.6h2.6v5.4H0M0 524.2h2.6" fill="none" stroke="#5f6368" stroke-width=".9"/>
 <rect x="0" y="566" width="2.5" height="1" fill="#9aa0a6"/>
 <path d="M2.6 607.4v6M0 611.2h3.2M0 611.2l2.2-3.6" fill="none" stroke="#5f6368" stroke-width=".9"/>
 <rect x="24.7" y="133" width="14.4" height="14.7" rx="1.6" fill="#fff" stroke="#80868b" stroke-width="1.6"/>
 <rect x="27.1" y="136.2" width="1.9" height="1.7" fill="#80868b"/>
 <rect x="27.1" y="139.7" width="1.9" height="1.7" fill="#80868b"/>
 <rect x="27.1" y="143.3" width="1.9" height="1.7" fill="#80868b"/>
 <rect x="30.1" y="136.2" width="6" height="1.7" fill="#80868b"/>
 <rect x="30.1" y="139.7" width="6" height="1.7" fill="#80868b"/>
 <rect x="30.1" y="143.3" width="6" height="1.7" fill="#80868b"/>
</svg>
<div class="a" style="left:1297px;top:339px;width:8px;height:76px;border-radius:4px;background:#dadce0"></div>
<div class="a" style="left:1259.4px;top:589.4px;width:34.1px;height:34px;border-radius:5px;background:#f8f8f8;border:1px solid #dadce0"></div>
<svg class="ic" style="left:1268px;top:597px" width="17" height="20" viewBox="1268 597 17 20">
 <path d="M1269.7 597.8H1283.1Q1284.1 597.8 1284.1 598.8V612.1Q1284.1 613.1 1283.1 613.1H1278.6L1276.4 615.9L1274.2 613.1H1269.7Q1268.7 613.1 1268.7 612.1V598.8Q1268.7 597.8 1269.7 597.8Z" fill="#757575"/>
 <path d="M1276.5 600.7Q1277.2 604.8 1281.6 605.5Q1277.2 606.2 1276.5 610.4Q1275.8 606.2 1271.4 605.5Q1275.8 604.8 1276.5 600.7Z" fill="#fff"/>
</svg>
<!-- /EXTRAS -->
<div id="vline" class="a"></div>
</body></html>
